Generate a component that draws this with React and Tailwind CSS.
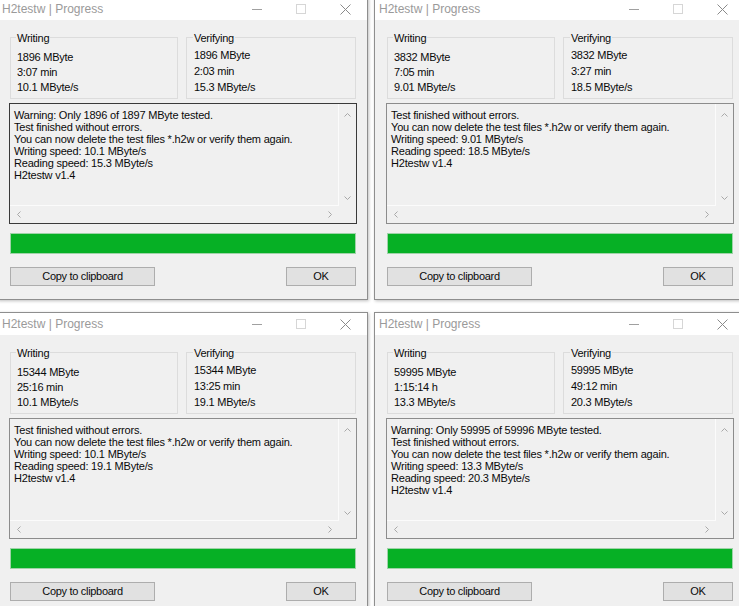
import React from "react";

const FONT = { fontFamily: '"Liberation Sans", Arial, sans-serif' };

const windows = [
  {
    writing: ["1896 MByte", "3:07 min", "10.1 MByte/s"],
    verifying: ["1896 MByte", "2:03 min", "15.3 MByte/s"],
    log: [
      "Warning: Only 1896 of 1897 MByte tested.",
      "Test finished without errors.",
      "You can now delete the test files *.h2w or verify them again.",
      "Writing speed: 10.1 MByte/s",
      "Reading speed: 15.3 MByte/s",
      "H2testw v1.4",
    ],
    focused: true,
  },
  {
    writing: ["3832 MByte", "7:05 min", "9.01 MByte/s"],
    verifying: ["3832 MByte", "3:27 min", "18.5 MByte/s"],
    log: [
      "Test finished without errors.",
      "You can now delete the test files *.h2w or verify them again.",
      "Writing speed: 9.01 MByte/s",
      "Reading speed: 18.5 MByte/s",
      "H2testw v1.4",
    ],
  },
  {
    writing: ["15344 MByte", "25:16 min", "10.1 MByte/s"],
    verifying: ["15344 MByte", "13:25 min", "19.1 MByte/s"],
    log: [
      "Test finished without errors.",
      "You can now delete the test files *.h2w or verify them again.",
      "Writing speed: 10.1 MByte/s",
      "Reading speed: 19.1 MByte/s",
      "H2testw v1.4",
    ],
  },
  {
    writing: ["59995 MByte", "1:15:14 h", "13.3 MByte/s"],
    verifying: ["59995 MByte", "49:12 min", "20.3 MByte/s"],
    log: [
      "Warning: Only 59995 of 59996 MByte tested.",
      "Test finished without errors.",
      "You can now delete the test files *.h2w or verify them again.",
      "Writing speed: 13.3 MByte/s",
      "Reading speed: 20.3 MByte/s",
      "H2testw v1.4",
    ],
  },
];

function Chevron({ dir }) {
  const paths = {
    up: "M0.5 4.5 L3.5 1.5 L6.5 4.5",
    down: "M0.5 1.5 L3.5 4.5 L6.5 1.5",
    left: "M4.5 0.5 L1.5 3.5 L4.5 6.5",
    right: "M1.5 0.5 L4.5 3.5 L1.5 6.5",
  };
  const vertical = dir === "up" || dir === "down";
  return (
    <svg
      width={vertical ? 7 : 6}
      height={vertical ? 6 : 7}
      viewBox={vertical ? "0 0 7 6" : "0 0 6 7"}
      fill="none"
      stroke="#a8a8a8"
      strokeWidth="1"
    >
      <path d={paths[dir]} />
    </svg>
  );
}

function CaptionButtons() {
  return (
    <div className="ml-auto flex h-full">
      <div className="w-[44px] flex items-center justify-center">
        <svg width="10" height="1" viewBox="0 0 10 1">
          <rect width="10" height="1" fill="#a0a0a0" />
        </svg>
      </div>
      <div className="w-[44px] flex items-center justify-center">
        <svg width="10" height="10" viewBox="0 0 10 10" fill="none">
          <rect x="0.5" y="0.5" width="9" height="9" stroke="#d6d6d6" />
        </svg>
      </div>
      <div className="w-[44px] flex items-center justify-center">
        <svg width="11" height="11" viewBox="0 0 11 11" fill="none" stroke="#8a8a8a" strokeWidth="1">
          <path d="M0.5 0.5 L10.5 10.5 M10.5 0.5 L0.5 10.5" />
        </svg>
      </div>
    </div>
  );
}

function GroupBox({ title, values, width, inset, lineH, gapTop }) {
  return (
    <div className={`${width} h-[62px] border border-[#dcdcdc] text-[11px] tracking-[-0.25px] text-[#0a0a0a]`}>
      <div className={`-mt-[6px] ${inset.label} px-[1px] w-fit bg-[#f0f0f0] leading-[12px]`}>{title}</div>
      <div className={`${inset.values} ${gapTop}`}>
        {values.map((v) => (
          <div key={v} className={lineH}>
            {v}
          </div>
        ))}
      </div>
    </div>
  );
}

function LogBox({ lines, focused }) {
  return (
    <div
      className={`mt-[4px] w-[348px] h-[121px] border ${
        focused ? "border-[#3a3a3a]" : "border-[#8c8c8c]"
      } bg-[#f0f0f0] grid grid-cols-[1fr_17px] grid-rows-[1fr_17px]`}
    >
      <div className="border-r border-b border-[#fbfbfb] pl-[4px] pt-[5px] text-[11px] leading-[12px] tracking-[-0.2px] text-[#0a0a0a] overflow-hidden">
        {lines.map((l) => (
          <div key={l} className="whitespace-nowrap">
            {l}
          </div>
        ))}
      </div>
      <div className="flex flex-col items-center justify-between pt-[8px] pb-[5px]">
        <Chevron dir="up" />
        <Chevron dir="down" />
      </div>
      <div className="flex items-center justify-between pl-[6px] pr-[6px]">
        <Chevron dir="left" />
        <Chevron dir="right" />
      </div>
      <div />
    </div>
  );
}

function ProgressWindow({ data }) {
  return (
    <div
      className="h-[303px] border border-[#8e8e8e] bg-[#f0f0f0] overflow-hidden flex flex-col shadow-[1px_1px_3px_rgba(0,0,0,0.25)]"
      style={FONT}
    >
      <div className="h-[22px] shrink-0 bg-white flex items-center">
        <span className="pl-[4px] text-[12px] text-[#9a9a9a] whitespace-nowrap">H2testw | Progress</span>
        <CaptionButtons />
      </div>
      <div className="pt-[17px] pl-[11px] pr-[10px] flex flex-col">
        <div className="flex gap-[8px] ml-[1px]">
          <GroupBox
            title="Writing"
            values={data.writing}
            width="w-[168px]"
            inset={{ label: "ml-[5px]", values: "pl-[6px]" }}
            lineH="leading-[15px]"
            gapTop="mt-[6px]"
          />
          <GroupBox
            title="Verifying"
            values={data.verifying}
            width="w-[170px]"
            inset={{ label: "ml-[6px]", values: "pl-[7px]" }}
            lineH="leading-[16px]"
            gapTop="mt-[3px]"
          />
        </div>
        <LogBox lines={data.log} focused={data.focused} />
        <div className="mt-[9px] ml-[1px] w-[346px] h-[21px] border border-[#9fd3a8] bg-[#06b025]" />
        <div className="mt-[13px] ml-[1px] w-[346px] flex justify-between text-[11px] tracking-[-0.3px] text-[#0a0a0a]">
          <div className="w-[145px] h-[19px] border border-[#adadad] bg-[#e1e1e1] flex items-center justify-center">
            Copy to clipboard
          </div>
          <div className="w-[70px] h-[19px] border border-[#adadad] bg-[#e1e1e1] flex items-center justify-center">
            OK
          </div>
        </div>
      </div>
    </div>
  );
}

export default function App() {
  return (
    <div className="w-[739px] h-[606px] overflow-hidden bg-white">
      <div className="-ml-[3px] -mt-[3px] grid grid-cols-[371px_371px] gap-x-[6px] gap-y-[12px]">
        {windows.map((w, i) => (
          <ProgressWindow key={i} data={w} />
        ))}
      </div>
    </div>
  );
}
